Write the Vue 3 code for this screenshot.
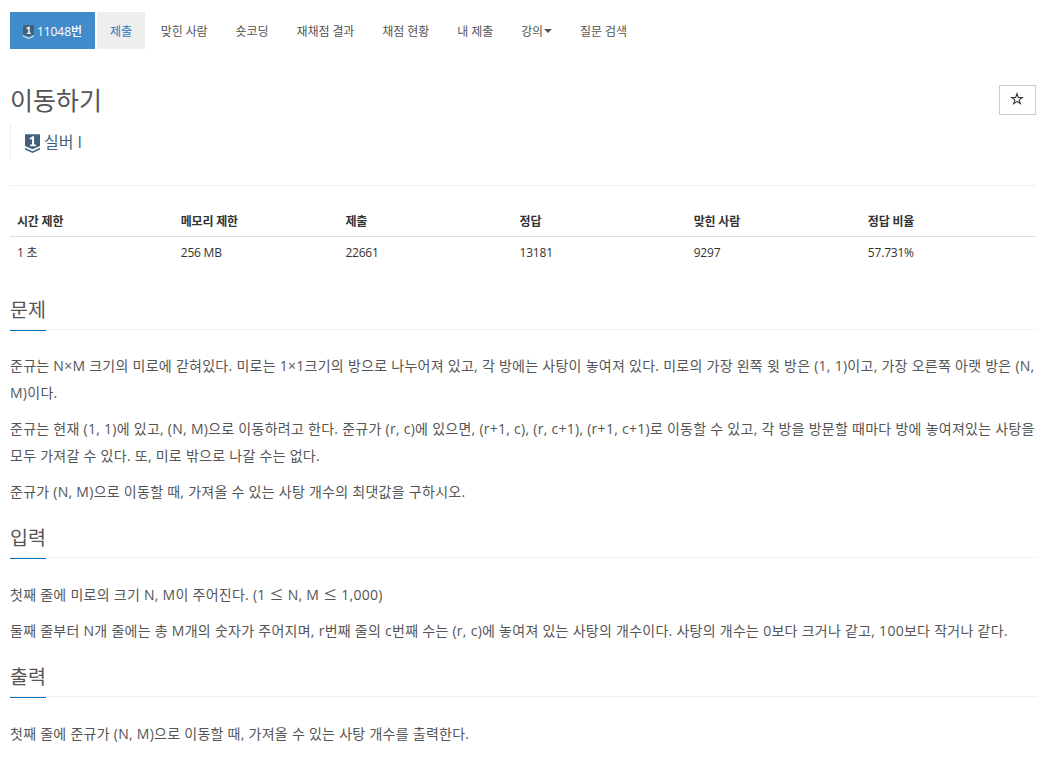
<template>
  <div class="container">
    <ul class="nav-pills">
      <li
        v-for="item in menu"
        :key="item.label"
        :class="{ active: item.active, hover: item.hover }"
      >
        <a href="#" @click.prevent>
          <svg v-if="item.active" class="tier" viewBox="0 0 16 20">
            <path class="tier-body" d="M0 0h16v13.2l-8 3.8-8-3.8z" />
            <path class="tier-line" d="M0 14.6l8 3.7 8-3.7v1.9L8 20l-8-3.5z" />
            <path class="tier-num" d="M5.2 5.2l3.4-1.9v9.6M5.6 12h6" />
          </svg>
          <span>{{ item.label }}</span>
          <i v-if="item.caret" class="caret"></i>
        </a>
      </li>
    </ul>

    <header class="page-header">
      <div class="title-row">
        <h1>이동하기</h1>
        <button class="favorite" @click="favorite = !favorite">
          <svg viewBox="0 0 14 14">
            <path
              :class="{ filled: favorite }"
              d="M7 1.6l1.3 3.75 4 .1-3.15 2.4 1.15 3.8L7 9.4l-3.3 2.25 1.15-3.8L1.7 5.45l4-.1z"
            />
          </svg>
        </button>
      </div>
      <blockquote>
        <svg class="tier" viewBox="0 0 16 20">
          <path class="tier-body" d="M0 0h16v12.6l-8 3.6-8-3.6z" />
          <path class="tier-line" d="M0 14.6l8 3.7 8-3.7v1.9L8 20l-8-3.5z" />
          <path class="tier-num" d="M5.2 5.2l3.4-1.9v9.6M5.6 12h6" />
        </svg>
        <span>실버 I</span>
      </blockquote>
    </header>

    <table>
      <thead>
        <tr>
          <th v-for="col in info" :key="col.name" :style="{ width: col.width }">{{ col.name }}</th>
        </tr>
      </thead>
      <tbody>
        <tr>
          <td v-for="col in info" :key="col.name">{{ col.value }}</td>
        </tr>
      </tbody>
    </table>

    <section v-for="section in sections" :key="section.title">
      <div class="headline">
        <h2>{{ section.title }}</h2>
      </div>
      <p v-for="text in section.body" :key="text">
        <span v-for="(part, i) in splitSigns(text)" :key="i" :class="{ sign: part === '≤' }">{{ part }}</span>
      </p>
    </section>
  </div>
</template>

<script setup>
import { ref } from 'vue'

const favorite = ref(false)

const menu = [
  { label: '11048번', active: true },
  { label: '제출', hover: true },
  { label: '맞힌 사람' },
  { label: '숏코딩' },
  { label: '재채점 결과' },
  { label: '채점 현황' },
  { label: '내 제출' },
  { label: '강의', caret: true },
  { label: '질문 검색' }
]

const info = [
  { name: '시간 제한', value: '1 초', width: '15.9%' },
  { name: '메모리 제한', value: '256 MB', width: '16%' },
  { name: '제출', value: '22661', width: '17%' },
  { name: '정답', value: '13181', width: '17%' },
  { name: '맞힌 사람', value: '9297', width: '17%' },
  { name: '정답 비율', value: '57.731%', width: '17.1%' }
]

const sections = [
  {
    title: '문제',
    body: [
      '준규는 N×M 크기의 미로에 갇혀있다. 미로는 1×1크기의 방으로 나누어져 있고, 각 방에는 사탕이 놓여져 있다. 미로의 가장 왼쪽 윗 방은 (1, 1)이고, 가장 오른쪽 아랫 방은 (N, M)이다.',
      '준규는 현재 (1, 1)에 있고, (N, M)으로 이동하려고 한다. 준규가 (r, c)에 있으면, (r+1, c), (r, c+1), (r+1, c+1)로 이동할 수 있고, 각 방을 방문할 때마다 방에 놓여져있는 사탕을 모두 가져갈 수 있다. 또, 미로 밖으로 나갈 수는 없다.',
      '준규가 (N, M)으로 이동할 때, 가져올 수 있는 사탕 개수의 최댓값을 구하시오.'
    ]
  },
  {
    title: '입력',
    body: [
      '첫째 줄에 미로의 크기 N, M이 주어진다. (1 ≤ N, M ≤ 1,000)',
      '둘째 줄부터 N개 줄에는 총 M개의 숫자가 주어지며, r번째 줄의 c번째 수는 (r, c)에 놓여져 있는 사탕의 개수이다. 사탕의 개수는 0보다 크거나 같고, 100보다 작거나 같다.'
    ]
  },
  {
    title: '출력',
    body: ['첫째 줄에 준규가 (N, M)으로 이동할 때, 가져올 수 있는 사탕 개수를 출력한다.']
  }
]

// Inequality signs are set in the full-width Korean font
const splitSigns = (text) => text.split(/(≤)/)
</script>

<style>
body {
  margin: 0;
  background: #fff;
}
</style>

<style scoped>
.container {
  box-sizing: border-box;
  width: 1060px;
  height: 760px;
  overflow: hidden;
  padding: 12px 24px 0 10px;
  font-family: "Open Sans", "Noto Sans CJK KR", sans-serif;
  font-size: 14px;
  color: #555;
}

.nav-pills {
  display: flex;
  gap: 2px;
  height: 37px;
  margin: 0;
  padding: 0;
  list-style: none;
  font-size: 12px;
}

.nav-pills a {
  display: flex;
  align-items: center;
  box-sizing: border-box;
  height: 37px;
  padding: 0 13px;
  color: #555;
  text-decoration: none;
  white-space: nowrap;
  letter-spacing: -0.08px;
}

.nav-pills .active a {
  width: 85px;
  background: #428bca;
  color: #fff;
  font-weight: 500;
}

.nav-pills .hover {
  margin-right: 0.7px;
}

.nav-pills .hover a {
  width: 48px;
  background: #eee;
  color: #2a78bd;
}

.nav-pills .tier {
  width: 11px;
  height: 14px;
  margin: 2px 3px 0 0;
}

.caret {
  margin: 1px 0 0 1px;
  border: 4px solid transparent;
  border-top-color: #555;
  border-bottom: 0;
}

.tier-body,
.tier-line {
  fill: #435f7a;
}

.active .tier-line {
  fill: #d6e4f0;
}

.tier-num {
  fill: none;
  stroke: #fff;
  stroke-width: 2.1;
}

.page-header {
  height: 136px;
  border-bottom: 1px solid #eee;
}

.title-row {
  display: flex;
  justify-content: space-between;
  padding-top: 34px;
}

h1 {
  margin: 0;
  font-size: 25px;
  font-weight: 400;
  line-height: 35px;
}

.favorite {
  display: flex;
  align-items: center;
  justify-content: center;
  width: 37px;
  height: 30px;
  margin-top: 2px;
  padding: 0 2px 3px 0;
  border: 1px solid #ccc;
  background: #fff;
}

.favorite svg {
  width: 14px;
  height: 14px;
}

.favorite path {
  fill: none;
  stroke: #333;
  stroke-width: 1.1;
}

.favorite path.filled {
  fill: #333;
}

blockquote {
  display: flex;
  align-items: center;
  height: 35px;
  margin: 6px 0 0;
  padding-left: 14px;
  border-left: 1px solid #eee;
  color: #435f7a;
  font-size: 16px;
}

blockquote span {
  margin-top: -2px;
}

blockquote .tier {
  width: 15px;
  height: 19px;
  margin: 3px 4px 0 0;
}

table {
  width: 100%;
  margin-top: 18px;
  border-collapse: collapse;
  table-layout: fixed;
  font-size: 12px;
  color: #333;
}

th,
td {
  height: 32px;
  padding: 0 7px;
  text-align: left;
  line-height: 18px;
}

th {
  height: 29px;
  padding-top: 3px;
  border-bottom: 1px solid #ddd;
  font-weight: 700;
  letter-spacing: -0.2px;
}

td {
  letter-spacing: -0.2px;
}

.headline {
  height: 34px;
  margin: 18px 0 23px;
  border-bottom: 1px dotted #dbe1e8;
}

section:first-of-type .headline {
  margin: 26px 0 22px;
}

h2 {
  display: inline-block;
  height: 35px;
  margin: 0;
  border-bottom: 1px solid #0076bd;
  font-size: 19.5px;
  font-weight: 400;
  line-height: 30px;
}

p {
  margin: 0 0 9px;
  line-height: 27px;
  letter-spacing: 0.27px;
}

.sign {
  font-family: "Noto Sans CJK KR", sans-serif;
  line-height: 1;
}
</style>
